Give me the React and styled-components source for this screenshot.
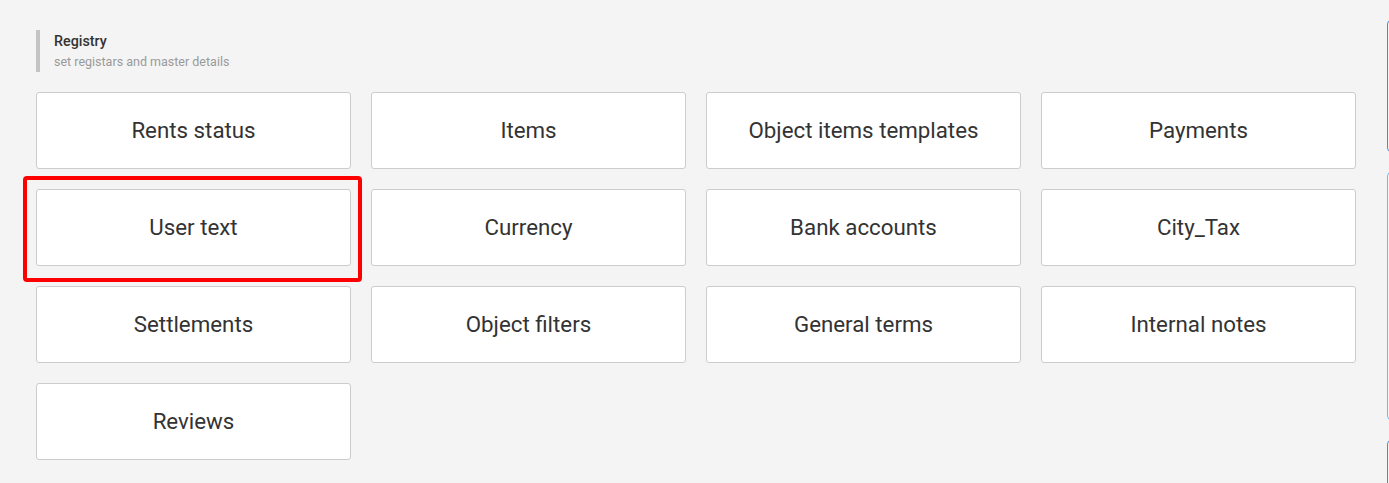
import styled, { createGlobalStyle } from "styled-components";

const GlobalStyle = createGlobalStyle`
    html, body {
        margin: 0;
        padding: 0;
        background: #f4f4f4;
        overflow: hidden;
    }
    body {
        font-family: Roboto, "Liberation Sans", Arial, sans-serif;
        color: #333;
    }
`;

const registry = [
    "Rents status",
    "Items",
    "Object items templates",
    "Payments",
    "User text",
    "Currency",
    "Bank accounts",
    "City_Tax",
    "Settlements",
    "Object filters",
    "General terms",
    "Internal notes",
    "Reviews",
];

function App() {
    return (
        <>
            <GlobalStyle />
            <Page>
                <Main>
                    <Header>
                        <Title>Registry</Title>
                        <Subtitle>set registars and master details</Subtitle>
                    </Header>
                    <Grid>
                        {registry.map((label) => (
                            <Tile key={label} $highlighted={label === "User text"}>
                                {label}
                            </Tile>
                        ))}
                    </Grid>
                </Main>
                <Side>
                    <SidePanel $height={130} $color="#3d8fe0" />
                    <SidePanel $height={246} $color="#6cbaf2" />
                    <SidePanel $height={120} $color="#3d8fe0" />
                </Side>
            </Page>
        </>
    );
}

const Page = styled.div`
    display: flex;
    align-items: flex-start;
    width: 1800px;
    padding: 30px 0 0 36px;
    box-sizing: border-box;
`;

const Main = styled.div`
    width: 1321px;
    flex-shrink: 0;
`;

const Header = styled.div`
    border-left: 4px solid #c4c4c4;
    padding: 1px 0 1px 14px;
`;

const Title = styled.div`
    font-size: 14.3px;
    font-weight: 500;
    line-height: 20px;
    color: #333;
`;

const Subtitle = styled.div`
    margin-top: 2px;
    font-size: 12.5px;
    line-height: 18px;
    color: #9a9a9a;
`;

const Grid = styled.div`
    display: grid;
    grid-template-columns: repeat(4, 315px);
    grid-auto-rows: 77px;
    gap: 20px;
    margin-top: 20px;
`;

const Tile = styled.div`
    position: relative;
    display: flex;
    align-items: center;
    justify-content: center;
    padding-bottom: 2px;
    background: #fff;
    border: 1px solid #cccccc;
    border-radius: 3px;
    font-size: 22.3px;
    color: #333;
    cursor: pointer;

    ${(p) =>
        p.$highlighted &&
        `
        &::after {
            content: "";
            position: absolute;
            top: -14px;
            left: -14px;
            right: -12px;
            bottom: -17px;
            border: 4px solid #ff0000;
            border-radius: 4px;
            pointer-events: none;
        }
    `}
`;

const Side = styled.div`
    display: flex;
    flex-direction: column;
    gap: 20px;
    margin-left: 30px;
    margin-top: -10px;
    width: 320px;
    flex-shrink: 0;
`;

const SidePanel = styled.div`
    height: ${(p) => p.$height}px;
    border: 1px solid ${(p) => p.$color};
    border-radius: 4px;
    background: #f4f4f4;
`;

export default App;
